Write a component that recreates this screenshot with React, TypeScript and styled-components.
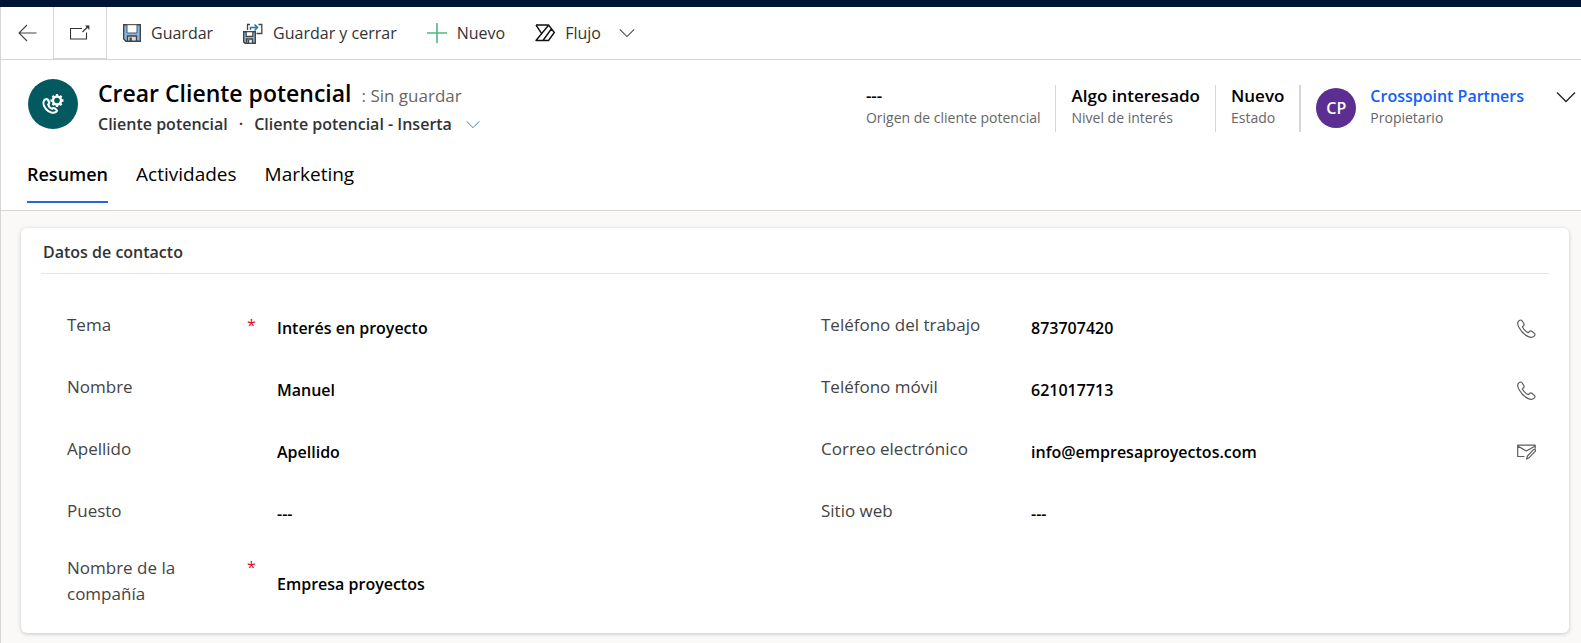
import React from 'react';
import styled, { createGlobalStyle } from 'styled-components';

const GlobalStyle = createGlobalStyle`
  *, *::before, *::after { box-sizing: border-box; }
  body {
    margin: 0;
    background: #faf9f8;
    color: #333;
    font-family: 'Segoe UI', 'Open Sans', 'Noto Sans', sans-serif;
    font-size: 17px;
  }
  button, input { font: inherit; color: inherit; }
  svg { display: block; flex: none; }
`;

const Page = styled.div`
  min-height: 100vh;
  display: flex;
  flex-direction: column;
`;

const BrandBar = styled.div`
  height: 7px;
  background: #001433;
`;

const Frame = styled.div`
  flex: 1;
  border-left: 1px solid #d6d6d6;
`;

const CommandBar = styled.div`
  display: flex;
  height: 53px;
  background: #fff;
  border-bottom: 1px solid #d6d6d6;
`;

const PlainButton = styled.button`
  display: flex;
  align-items: center;
  margin: 0;
  padding: 0;
  border: 0;
  background: none;
  cursor: pointer;
`;

const SquareButton = styled(PlainButton)`
  justify-content: center;
  width: 53px;
  border-right: 1px solid #d6d6d6;
`;

const PopOutButton = styled(SquareButton)`
  height: 52px;
  background: #fff;
  border-bottom: 1px solid #d6d6d6;
`;

const Commands = styled.div`
  display: flex;
  gap: 30px;
  padding-left: 16px;
`;

const Command = styled(PlainButton)`
  gap: 10px;
  font-size: 16px;
  line-height: 24px;
  white-space: nowrap;
`;

const CommandLabel = styled.span<{ $wide?: boolean }>`
  margin-right: ${(p) => (p.$wide ? 8 : 0)}px;
`;

const RecordHeader = styled.header`
  background: #fff;
  border-bottom: 1px solid #d6d6d6;
`;

const HeaderTop = styled.div`
  display: flex;
  justify-content: space-between;
  padding: 19px 5px 0 27px;
`;

const Identity = styled.div`
  display: flex;
  gap: 20px;
`;

const EntityBadge = styled.div`
  display: flex;
  align-items: center;
  justify-content: center;
  width: 50px;
  height: 50px;
  border-radius: 50%;
  background: #02595f;
`;

const TitleRow = styled.div`
  display: flex;
  align-items: baseline;
  gap: 10px;
  line-height: 28px;
`;

const Title = styled.h1`
  margin: 0;
  color: #000;
  font-size: 23px;
  font-weight: 600;
`;

const SaveState = styled.span`
  color: #666;
`;

const FormRow = styled.div`
  display: flex;
  align-items: center;
  gap: 11px;
  font-size: 16px;
  font-weight: 600;
  line-height: 28px;
`;

const FormPicker = styled(PlainButton)`
  gap: 14px;
`;

const Facts = styled.dl`
  display: flex;
  margin: 6px 0 0;
  height: 47px;
`;

const Fact = styled.div<{ $rule?: number }>`
  display: flex;
  flex-direction: column-reverse;
  justify-content: flex-end;
  padding: 0 15px;
  border-left: ${(p) => p.$rule ?? 0}px solid #d6d6d6;
`;

const Owner = styled.div`
  display: flex;
  gap: 14px;
  padding: 0 32px 0 15px;
  border-left: 2px solid #d6d6d6;
`;

const OwnerText = styled.div`
  display: flex;
  flex-direction: column-reverse;
  justify-content: flex-end;
`;

const FactName = styled.dt`
  color: #666;
  font-size: 14px;
  line-height: 22px;
`;

const FactValue = styled.dd`
  margin: 0;
  color: #000;
  font-size: 17px;
  font-weight: 600;
  line-height: 22px;
`;

const OwnerLink = styled.a`
  color: #1160f7;
  font-size: 16px;
  text-decoration: none;
`;

const Avatar = styled.div`
  display: flex;
  align-items: center;
  justify-content: center;
  width: 40px;
  height: 40px;
  margin-top: 3px;
  border-radius: 50%;
  background: #5c2e91;
  color: #fff;
  font-size: 16px;
  font-weight: 600;
`;

const ExpandButton = styled(PlainButton)`
  height: 24px;
`;

const Tabs = styled.nav`
  display: flex;
  gap: 28px;
  padding: 22px 26px 7px;
`;

const Tab = styled.a<{ $active?: boolean }>`
  padding-bottom: 13px;
  border-bottom: 2px solid ${(p) => (p.$active ? '#2266e3' : 'transparent')};
  color: #000;
  font-size: ${(p) => (p.$active ? 18 : 19)}px;
  font-weight: ${(p) => (p.$active ? 600 : 400)};
  line-height: 28px;
  text-decoration: none;
`;

const Body = styled.main`
  padding: 17px 12px 10px 20px;
`;

const Card = styled.section`
  padding: 0 20px 13px;
  border-radius: 6px;
  background: #fff;
  box-shadow: 0 1px 4px rgba(0, 0, 0, 0.2);
`;

const CardTitle = styled.h2`
  margin: 0;
  padding: 12px 2px 9px;
  border-bottom: 1px solid #e5e5e5;
  color: #333;
  font-size: 16px;
  font-weight: 600;
  line-height: 24px;
`;

const Columns = styled.div`
  display: grid;
  grid-template-columns: 1fr 1fr;
  padding-top: 20px;
`;

const Column = styled.div`
  padding: 0 13px 0 26px;
`;

const Field = styled.div<{ $tall?: boolean }>`
  display: flex;
  align-items: center;
  min-height: ${(p) => (p.$tall ? 78 : 62)}px;
`;

const FieldLabel = styled.label`
  width: 160px;
  color: #444;
  line-height: 26px;
`;

const FieldMark = styled.span<{ $tall?: boolean }>`
  align-self: flex-start;
  width: 50px;
  padding: ${(p) => (p.$tall ? 12 : 18)}px 0 0 20px;
  color: #e00b1c;
  font-size: 16px;
  line-height: 26px;
`;

const FieldInput = styled.input`
  flex: 1;
  min-width: 0;
  padding: 6px 0 0;
  border: 0;
  outline: 0;
  background: none;
  color: #000;
  font-weight: 600;
  font-size: 16px;
  line-height: 26px;

  &::placeholder { color: #000; opacity: 1; }
`;

const FieldAction = styled(PlainButton)`
  padding-top: 6px;
`;

const Chevron = ({ width, color }: { width: number; color: string }) => (
  <svg width={width} height={width / 2 + 2} viewBox="0 0 20 12" fill="none" stroke={color} strokeWidth="1.3">
    <path d="M1 1.500l9 9 9-9" />
  </svg>
);

const BackIcon = () => (
  <svg width="19" height="18" viewBox="0 0 19 18" fill="none" stroke="#444" strokeWidth="1.1">
    <path d="M18.500 9H1M9 1L1 9l8 8" />
  </svg>
);

const PopOutIcon = () => (
  <svg width="20" height="16" viewBox="0 0 20 16" fill="none" stroke="#333" strokeWidth="1.1">
    <path d="M12 3.500H.5v10.500h16V7.500M12.500 7l6-6" />
    <path d="M15 .6h4.400V5z" fill="#333" stroke="none" />
  </svg>
);

const SaveIcon = () => (
  <svg width="18" height="18" viewBox="0 0 18 18">
    <path d="M.7.7h16.600v16.600H3L.7 15z" fill="#83b9e9" stroke="#444" strokeWidth="1.4" />
    <path d="M4 .7h10v8.300H4z" fill="#fff" stroke="#555" strokeWidth="1" />
    <path d="M4.500 12h9v5.300h-9z" fill="#ddd" stroke="#444" strokeWidth="1.4" />
    <path d="M6.500 13.500h2.300v3.500H6.500z" fill="#444" />
  </svg>
);

const SaveCloseIcon = () => (
  <svg width="20" height="21" viewBox="0 0 20 21">
    <path d="M.7 8.700h11.600v11.600H2L.7 19z" fill="#83b9e9" stroke="#444" strokeWidth="1.4" />
    <path d="M3.200 8.700h6.600v4.600H3.200z" fill="#fff" stroke="#444" strokeWidth="1.2" />
    <path d="M3.500 16h6v4.300h-6z" fill="#eee" stroke="#444" strokeWidth="1.3" />
    <path d="M4.500 17h1.700v3H4.500z" fill="#444" />
    <path d="M7 1.500H4.500V7M15.500 1.500H18.800v9H13.500" fill="none" stroke="#444" strokeWidth="1.3" />
    <path d="M7.500 7V4.500h6.500M11.500 1.500l3 3-3 3" fill="none" stroke="#1f74c4" strokeWidth="1.5" />
  </svg>
);

const PlusIcon = () => (
  <svg width="20" height="20" viewBox="0 0 20 20" stroke="#4db87c" strokeWidth="1.6">
    <path d="M10 0v20M0 10h20" />
  </svg>
);

const FlowIcon = () => (
  <svg width="20" height="18" viewBox="0 0 20 18" fill="none" stroke="#111" strokeWidth="1.4" strokeLinejoin="round">
    <path d="M1 1h12.500l5.800 7.500-5.800 8H1L13.300 1.500M1 1l5.500 8.300M8 16.500L16.300 5" />
  </svg>
);

const LeadIcon = () => (
  <svg width="24" height="24" viewBox="0 0 24 24" fill="none" stroke="#fff">
    <path
      d="M3.200 8.200c-1.300 2-.9 5.800 2 9 3 3.200 7.200 4.700 9.800 2.700 1.200-.9 1.200-1.500.4-2.200l-2-1.500c-.8-.5-1.500-.2-2.200.6-1.900-.6-3.400-2.300-4-4.300.9-.5 1.300-1.200 1-2L7.100 8c-.5-1.300-2.700-1.200-3.900.2z"
      strokeWidth="2.1"
    />
    <circle cx="16" cy="8.500" r="4" strokeWidth="2.4" />
    <path
      d="M16 2v2.500M16 12.500V15M9.500 8.500H12M20 8.500h2.500M11.400 3.900l1.800 1.800M18.800 11.300l1.800 1.800M20.600 3.900l-1.800 1.800M13.200 11.300l-1.800 1.800"
      strokeWidth="2.3"
    />
  </svg>
);

const PhoneIcon = () => (
  <svg width="19" height="19" viewBox="0 0 19 19" fill="none" stroke="#5c5c5c" strokeWidth="1.2" strokeLinejoin="round">
    <path d="M2.300 1.500C.3 2.700.4 5.600 2 8.500c1.900 3.600 5 7 8.800 8.900 2.500 1.200 5 1.300 6.600-.6.800-.9.800-1.700 0-2.400l-2.600-2.100c-.8-.6-1.600-.5-2.300.2l-1.300 1.200C8.800 12.500 6.600 10.200 5.300 8l1.300-1.300c.6-.6.700-1.400.2-2.200L5 1.700C4.400.8 3.300.8 2.300 1.500z" />
  </svg>
);

const MailEditIcon = () => (
  <svg width="19" height="16" viewBox="0 0 19 16" fill="none" stroke="#5c5c5c" strokeWidth="1.2" strokeLinejoin="round">
    <path d="M7.500 12.500H.7V1.200h17.500v3.500M.7 2l8.700 5 8.700-5M9.500 15l1-3 6-6.300c1.400-.9 2.600.3 1.700 1.700L12 13.800z" />
  </svg>
);

type FieldData = {
  id: string;
  label: string;
  value?: string;
  required?: boolean;
  multiLine?: boolean;
  action?: 'phone' | 'mail';
};

const personFields: FieldData[] = [
  { id: 'tema', label: 'Tema', value: 'Interés en proyecto', required: true },
  { id: 'nombre', label: 'Nombre', value: 'Manuel' },
  { id: 'apellido', label: 'Apellido', value: 'Apellido' },
  { id: 'puesto', label: 'Puesto' },
  { id: 'compania', label: 'Nombre de la compañía', value: 'Empresa proyectos', required: true, multiLine: true },
];

const contactFields: FieldData[] = [
  { id: 'trabajo', label: 'Teléfono del trabajo', value: '873707420', action: 'phone' },
  { id: 'movil', label: 'Teléfono móvil', value: '621017713', action: 'phone' },
  { id: 'correo', label: 'Correo electrónico', value: 'info@empresaproyectos.com', action: 'mail' },
  { id: 'web', label: 'Sitio web' },
];

const FormField = ({ field }: { field: FieldData }) => (
  <Field $tall={field.multiLine}>
    <FieldLabel htmlFor={field.id}>{field.label}</FieldLabel>
    <FieldMark $tall={field.multiLine}>{field.required ? '*' : ''}</FieldMark>
    <FieldInput id={field.id} defaultValue={field.value} placeholder="---" required={field.required} />
    {field.action && (
      <FieldAction type="button" aria-label={field.action === 'phone' ? 'Llamar' : 'Enviar correo'}>
        {field.action === 'phone' ? <PhoneIcon /> : <MailEditIcon />}
      </FieldAction>
    )}
  </Field>
);

export default function App() {
  return (
    <Page>
      <GlobalStyle />
      <BrandBar />
      <Frame>
        <CommandBar>
          <SquareButton type="button" aria-label="Atrás"><BackIcon /></SquareButton>
          <PopOutButton type="button" aria-label="Abrir en ventana nueva"><PopOutIcon /></PopOutButton>
          <Commands>
            <Command type="button"><SaveIcon /><CommandLabel>Guardar</CommandLabel></Command>
            <Command type="button"><SaveCloseIcon /><CommandLabel>Guardar y cerrar</CommandLabel></Command>
            <Command type="button"><PlusIcon /><CommandLabel>Nuevo</CommandLabel></Command>
            <Command type="button">
              <FlowIcon />
              <CommandLabel $wide>Flujo</CommandLabel>
              <Chevron width={16} color="#444" />
            </Command>
          </Commands>
        </CommandBar>

        <RecordHeader>
          <HeaderTop>
            <Identity>
              <EntityBadge><LeadIcon /></EntityBadge>
              <div>
                <TitleRow>
                  <Title>Crear Cliente potencial</Title>
                  <SaveState>: Sin guardar</SaveState>
                </TitleRow>
                <FormRow>
                  <span>Cliente potencial</span>
                  <span>·</span>
                  <FormPicker type="button">
                    Cliente potencial - Inserta
                    <Chevron width={14} color="#3a7a8c" />
                  </FormPicker>
                </FormRow>
              </div>
            </Identity>
            <Facts>
              <Fact>
                <FactName>Origen de cliente potencial</FactName>
                <FactValue>---</FactValue>
              </Fact>
              <Fact $rule={1}>
                <FactName>Nivel de interés</FactName>
                <FactValue>Algo interesado</FactValue>
              </Fact>
              <Fact $rule={1}>
                <FactName>Estado</FactName>
                <FactValue>Nuevo</FactValue>
              </Fact>
              <Owner>
                <Avatar>CP</Avatar>
                <OwnerText>
                  <FactName>Propietario</FactName>
                  <FactValue><OwnerLink href="#propietario">Crosspoint Partners</OwnerLink></FactValue>
                </OwnerText>
              </Owner>
              <ExpandButton type="button" aria-label="Más campos"><Chevron width={20} color="#222" /></ExpandButton>
            </Facts>
          </HeaderTop>
          <Tabs>
            <Tab href="#resumen" $active>Resumen</Tab>
            <Tab href="#actividades">Actividades</Tab>
            <Tab href="#marketing">Marketing</Tab>
          </Tabs>
        </RecordHeader>

        <Body>
          <Card>
            <CardTitle>Datos de contacto</CardTitle>
            <Columns>
              <Column>{personFields.map((f) => <FormField key={f.id} field={f} />)}</Column>
              <Column>{contactFields.map((f) => <FormField key={f.id} field={f} />)}</Column>
            </Columns>
          </Card>
        </Body>
      </Frame>
    </Page>
  );
}
